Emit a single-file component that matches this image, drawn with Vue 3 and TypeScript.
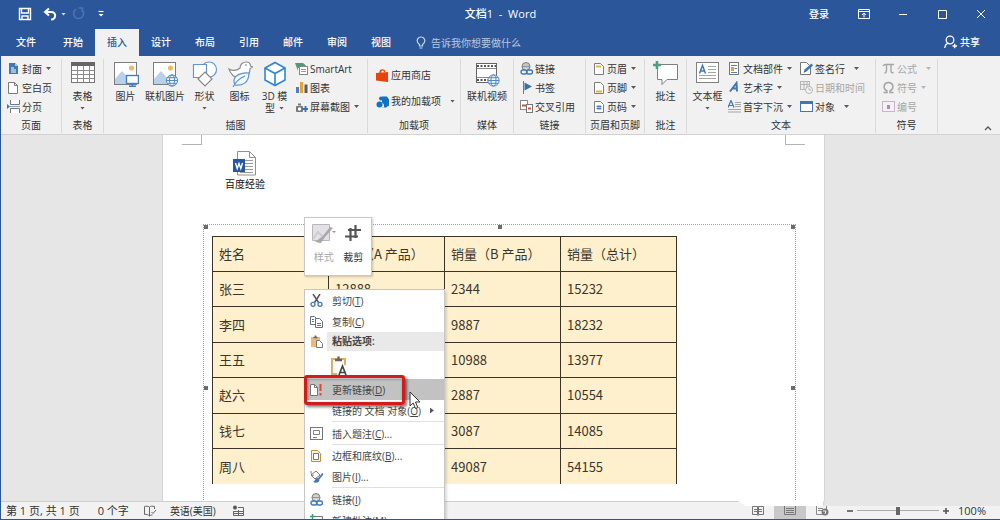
<script setup lang="ts">
import { ref } from 'vue'

interface Cmd {
  text: string
  icon: string
  caret?: 'near' | 'far'
  off?: boolean
  second?: string
}
interface Group {
  name: string
  label: string
  big?: Cmd[]
  cols?: Cmd[][]
}
interface MenuItem {
  text?: string
  key?: string
  tail?: string
  icon?: string
  kind?: 'item' | 'thin' | 'sep' | 'head' | 'paste'
  hot?: boolean
  sub?: boolean
}

const globe = (x: number, y: number, r: number, c: string) =>
  `<g fill="#f4f8fc" stroke="${c}" stroke-width="1"><circle cx="${x}" cy="${y}" r="${r}"/><ellipse cx="${x}" cy="${y}" rx="${r / 2.2}" ry="${r}" fill="none"/><path d="M${x - r} ${y}h${2 * r}M${x - r * 0.85} ${y - r / 2}h${r * 1.7}M${x - r * 0.85} ${y + r / 2}h${r * 1.7}" fill="none"/></g>`

const photo = '<rect x="1.5" y="1.5" width="22" height="22" fill="#fff" stroke="#7c7c7c"/><circle cx="18.5" cy="7" r="2.6" fill="#eebc63"/><path d="M2 23v-5l7-8 8 9 2-2 4 4v2z" fill="#b9d0ea"/>'

const bigIcons: Record<string, string> = {
  table: '<rect x="1.5" y="1.5" width="23" height="20" fill="#fff" stroke="#777"/><path d="M1 1h24v4H1z" fill="#666"/><path d="M7.5 5v16M13.5 5v16M19.5 5v16M2 9.500h22M2 13.500h22M2 17.500h22" stroke="#8a8a8a" fill="none"/>',
  picture: photo + '<rect x="13.500" y="14.500" width="12" height="8" fill="#fff" stroke="#3f7fc4" stroke-width="1.400"/><path d="M19.500 22.500v2.500M16 25.300h7" stroke="#3f7fc4" stroke-width="1.400"/>',
  online: photo + globe(20, 19.500, 5.600, '#4d87c4'),
  shapes: '<g fill="#fff" stroke="#6296d0" stroke-width="1.200"><circle cx="17" cy="8.500" r="7.500"/><path d="M1.500 3.500h13v13h-13z"/><path d="M13 11l7 7-7 7-7-7z" stroke="#888"/></g>',
  icons: '<path d="M2 8c3 2 8 2 11-1 0-4 3-6 6-6 3 0 4.500 2 4.500 4l2 1-2.500 1.500c0 4-2 7-5 8-4 2-9 2-12-1-2-2-3.500-4-4-6.500z" fill="#fff" stroke="#8b8b8b" stroke-width="1.200"/><circle cx="19" cy="4" r=".8" fill="#666"/><path d="M22 12c-7-1-15 2-15 8 0 1 .5 3 1 4 7 1 14-2 14-12zM6 26c3-6 7-9 12-11" fill="#f3f8fd" stroke="#5b92cf" stroke-width="1.200"/>',
  cube: '<path d="M13 1.500l10 5.500v12L13 24.500 3 19V7z" fill="#fff" stroke="#2e86d6" stroke-width="1.600"/><path d="M3 7l10 5.500L23 7M13 12.500v12" fill="none" stroke="#2e86d6" stroke-width="1.600"/>',
  video: '<rect x="2.500" y="2.500" width="20" height="19" fill="#fff" stroke="#666"/><path d="M3 5h19M3 19h19" stroke="#555" stroke-width="2" stroke-dasharray="2 1.500"/><path d="M3 7.500h19M3 16.500h19" stroke="#888"/>' + globe(19.500, 19.500, 5.600, '#4d87c4'),
  comment: '<path d="M4.500 3.500h20v15H14l-5 5v-5H4.500z" fill="#fff" stroke="#7f7f7f"/><path d="M4 0v8M0 4h8" stroke="#4d9f7d" stroke-width="2.600"/>',
  textbox: '<rect x="1.500" y="1.500" width="22" height="20" fill="#fff" stroke="#808080"/><path d="M4.500 12.500l3-8 3 8M5.500 10h4" stroke="#3e78ba" stroke-width="1.500" fill="none"/><path d="M13 5.500h8M13 8.500h8M13 11.500h8M4 14.500h17M4 17.500h17" stroke="#a5a5a5"/>'
}

const link = '<g fill="none"><circle cx="6" cy="4.500" r="4" stroke="#777"/><path d="M2 4.500h8M6 .5v6M4 1v6M8 1v6" stroke="#888" stroke-width=".8"/><rect x="1" y="8" width="6" height="4" rx="2" fill="#f1f1f1" stroke="#3c78b8" stroke-width="1.400"/><rect x="6.500" y="8" width="6" height="4" rx="2" stroke="#3c78b8" stroke-width="1.400"/></g>'
const sheet = '<path d="M2.500 1.500h6l3 3v8h-9z" fill="#fff" stroke="#7d7d7d"/>'

const smallIcons: Record<string, string> = {
  cover: '<path d="M2 1h6l3 3v8H2z" fill="#3f78b5"/><path d="M8 1v3h3" fill="#a9c6e4"/><path d="M4 6h3M4 8h5M4 10h5" stroke="#fff"/>',
  blank: '<path d="M1.500 1.500h6l3 3v8h-9z" fill="#fff" stroke="#7a7a7a"/><path d="M7.500 1.500v3h3" fill="none" stroke="#7a7a7a"/>',
  pagebreak: '<path d="M3.500 0v4.500h9V0M3.500 13V8.500h9V13" fill="#fff" stroke="#777"/><path d="M3 6.500h10" stroke="#8aa9c9"/><path d="M0 4l3 2.500L0 9z" fill="#3a78b8"/>',
  smartart: '<path d="M0 1h8l3 2.500-3 2.500H3v3z" fill="#4f9a79"/><rect x="4.500" y="4.500" width="8" height="8" fill="#fff" stroke="#888"/><path d="M6 7.500h5M6 9.500h5" stroke="#999"/>',
  chart: '<path d="M1 6h3v6H1z" fill="#4a80bd"/><path d="M5 1h3v11H5z" fill="#e3a13e"/><path d="M9.500 3.500h3V12h-3z" fill="#5d5d5d"/>',
  shot: '<rect x="1" y="6" width="7" height="6" rx="1" fill="#777"/><path d="M3 4.500h3" stroke="#777" stroke-width="2"/><circle cx="4.500" cy="9" r="1.700" fill="#fff"/><path d="M10.500 6v6M7.500 9h6" stroke="#2f73b8" stroke-width="1.800"/>',
  store: '<path d="M0 4l12-1v10L0 11.500z" fill="#e8430d"/><path d="M4 4c0-4 4.500-4 5-1" fill="none" stroke="#e8430d" stroke-width="1.400"/>',
  addin: '<path d="M6 1.500h5l2 3v6l-3 2H6z" fill="#1272c4"/><circle cx="5" cy="3.500" r="2" fill="#1272c4"/><path d="M0 6.500h5l3 3v3H0z" fill="#f1f1f1"/><circle cx="3.500" cy="9.500" r="3" fill="#1272c4"/>',
  link,
  bookmark: '<path d="M3.500 0v13" stroke="#777"/><path d="M4.500 1.500l7.500 4-7.500 4z" fill="#3b70aa"/>',
  cross: '<rect x=".5" y=".5" width="7" height="9" fill="#fff" stroke="#888"/><rect x="6.500" y="4.500" width="6" height="8" fill="#fff" stroke="#777"/><path d="M2 5.500h4M8 8.500h3" stroke="#cf553b" stroke-width="1.800"/>',
  header: sheet + '<path d="M4 4.500h5" stroke="#e3b04f" stroke-width="2"/>',
  footer: sheet + '<path d="M4 10.500h6" stroke="#e3b04f" stroke-width="2"/>',
  number: sheet + '<path d="M6 5v5M8 5v5M4.500 6.500h5M4.500 8.500h5" stroke="#3e78ba" stroke-width=".9"/>',
  parts: '<rect x="1.500" y=".5" width="9" height="12" fill="#fff" stroke="#777"/><path d="M3 3.500h6M6.500 6.500H9M3 10.500h6" stroke="#5583ba"/><path d="M3 5h3v4H3z" fill="#e2a33f"/>',
  wordart: '<path d="M2 10.500l6.500-8.500.5 8.500M4.500 7.500H9" stroke="#3e78ba" stroke-width="2" fill="none"/>',
  dropcap: '<path d="M0 7.500L3 .5l3 7M1 5.500h4" stroke="#3e78ba" stroke-width="1.200" fill="none"/><path d="M7 2.500h6M7 4.500h6M7 6.500h6M0 9.500h13M0 12h13" stroke="#a5a5a5"/>',
  sign: '<path d="M.5.500h6l4 4v8H.5z" fill="#fff" stroke="#777"/><path d="M3.500 11l1-3.500 7-6 1.500 2-6.500 6z" fill="#3e78ba"/>',
  date: '<rect x=".5" y=".5" width="9" height="8" fill="#eee" stroke="#b5b5b5"/><path d="M1 3.500h9M4 1v7M7 1v7" stroke="#b5b5b5"/><circle cx="9" cy="9" r="3.500" fill="#f4f4f4" stroke="#b5b5b5"/><path d="M9 7v2h2" fill="none" stroke="#b5b5b5"/>',
  object: '<rect x=".5" y="1.500" width="12" height="10" fill="#fff" stroke="#3e78ba"/><path d="M0 1h13v3H0z" fill="#3e78ba"/>',
  pi: '<path d="M1 4c1-2 2-1.500 4-1.500h7M4.500 3v5c0 2-1 3-2 3M9 3v6c0 2 1.500 2 2.500 1.500" fill="none" stroke="#a5a5a5" stroke-width="1.400"/>',
  omega: '<path d="M1.500 11.500H5V10C0 7 2 1.500 6.500 1.500S13 7 8 10v1.500h3.500" fill="none" stroke="#a5a5a5" stroke-width="1.500"/>',
  num: '<rect x=".5" y="1.500" width="12" height="10" fill="#f6eff6" stroke="#c9b4cb"/><path d="M5 5h3v4H5z" fill="#a890ab"/>',
  cut: '<path d="M3 0l5.500 8.500M10 0L4.500 8.500" stroke="#555" stroke-width="1.500"/><circle cx="3" cy="10.300" r="2" fill="none" stroke="#3e78ba" stroke-width="1.300"/><circle cx="10" cy="10.300" r="2" fill="none" stroke="#3e78ba" stroke-width="1.300"/>',
  copy: '<g fill="#fff" stroke="#5f6f80"><path d="M.5 1.500h4l2 2v6h-6z"/><path d="M5.500 3.500h4l3 3v6h-7z"/></g><path d="M2 4.500h2M2 6.500h2M7 8.500h4M7 10.500h4" stroke="#3e78ba"/>',
  paste: '<path d="M1 2h9v10H1z" fill="#ecba78"/><path d="M3.500 2.500h4M5.500.500v2" stroke="#666" stroke-width="1.600"/><path d="M6.500 5.500h3l3 3v4h-6z" fill="#fff" stroke="#777"/>',
  update: '<path d="M.5 1.500h4l3 3v8h-7z" fill="#fff" stroke="#777"/><path d="M4.500 1.500v3h3" fill="none" stroke="#777"/><path d="M10.500 1v7M10.500 10v2.500" stroke="#dd4b39" stroke-width="2"/>',
  caption: '<rect x=".5" y=".5" width="12" height="12" fill="#fff" stroke="#777"/><path d="M3.500 3.500h6v4h-6zM3 10.500h4" fill="none" stroke="#8a7f90"/>',
  border: '<path d="M1.500 1.500h6l3 3v8h-9z" fill="#fdf1dc" stroke="#c58c3a"/><path d="M3.500 4.500h5v6h-5z" fill="#fff" stroke="#777"/>',
  format: '<path d="M1 5l5-4 4 4-5 4z" fill="#fff" stroke="#777"/><path d="M1 1c0 4 1 5 3 4" fill="none" stroke="#777"/><path d="M13 3.500L8.500 9" stroke="#3e78ba" stroke-width="1.800"/><path d="M7.500 8c-3 0-1.500 3-4.500 3.800 2 1.500 6.500 1.200 6.500-2z" fill="#3e78ba"/>',
  note: '<path d="M5 2.500h7.500v8H8l-3 2.500v-2.500H2.500V6" fill="#fff" stroke="#777"/><path d="M2.500 0v5M0 2.500h5" stroke="#3f9a73" stroke-width="1.400"/>'
}

const tabs = ['文件', '开始', '插入', '设计', '布局', '引用', '邮件', '审阅', '视图']
const activeTab = ref('插入')
const zoom = ref(50)

const groups: Group[] = [
  { name: 'pages', label: '页面', cols: [[
    { text: '封面', icon: 'cover', caret: 'near' },
    { text: '空白页', icon: 'blank' },
    { text: '分页', icon: 'pagebreak' }]] },
  { name: 'tables', label: '表格', big: [{ text: '表格', icon: 'table', caret: 'near' }] },
  { name: 'art', label: '插图', big: [
    { text: '图片', icon: 'picture' },
    { text: '联机图片', icon: 'online' },
    { text: '形状', icon: 'shapes', caret: 'near' },
    { text: '图标', icon: 'icons' },
    { text: '3D 模', icon: 'cube', second: '型', caret: 'near' }],
    cols: [[
      { text: 'SmartArt', icon: 'smartart' },
      { text: '图表', icon: 'chart' },
      { text: '屏幕截图', icon: 'shot', caret: 'near' }]] },
  { name: 'addins', label: '加载项', cols: [[
    { text: '应用商店', icon: 'store' },
    { text: '我的加载项', icon: 'addin', caret: 'far' }]] },
  { name: 'media', label: '媒体', big: [{ text: '联机视频', icon: 'video' }] },
  { name: 'links', label: '链接', cols: [[
    { text: '链接', icon: 'link' },
    { text: '书签', icon: 'bookmark' },
    { text: '交叉引用', icon: 'cross' }]] },
  { name: 'headers', label: '页眉和页脚', cols: [[
    { text: '页眉', icon: 'header', caret: 'near' },
    { text: '页脚', icon: 'footer', caret: 'near' },
    { text: '页码', icon: 'number', caret: 'near' }]] },
  { name: 'notes', label: '批注', big: [{ text: '批注', icon: 'comment' }] },
  { name: 'text', label: '文本', big: [{ text: '文本框', icon: 'textbox', caret: 'near' }],
    cols: [[
      { text: '文档部件', icon: 'parts', caret: 'near' },
      { text: '艺术字', icon: 'wordart', caret: 'near' },
      { text: '首字下沉', icon: 'dropcap', caret: 'near' }], [
      { text: '签名行', icon: 'sign', caret: 'far' },
      { text: '日期和时间', icon: 'date', off: true },
      { text: '对象', icon: 'object', caret: 'far' }]] },
  { name: 'symbols', label: '符号', cols: [[
    { text: '公式', icon: 'pi', caret: 'far', off: true },
    { text: '符号', icon: 'omega', caret: 'near', off: true },
    { text: '编号', icon: 'num', off: true }]] }
]

const head = ['姓名', '销量（A 产品）', '销量（B 产品）', '销量（总计）']
const rows = [
  ['张三', '12888', '2344', '15232'],
  ['李四', '8345', '9887', '18232'],
  ['王五', '2989', '10988', '13977'],
  ['赵六', '7667', '2887', '10554'],
  ['钱七', '10998', '3087', '14085'],
  ['周八', '5068', '49087', '54155']
]

const menu: MenuItem[] = [
  { text: '剪切(', key: 'T', tail: ')', icon: 'cut' },
  { text: '复制(', key: 'C', tail: ')', icon: 'copy' },
  { kind: 'head', text: '粘贴选项:', icon: 'paste' },
  { kind: 'paste' },
  { text: '更新链接(', key: 'D', tail: ')', icon: 'update', hot: true },
  { text: '链接的 文档 对象(', key: 'O', tail: ')', sub: true },
  { kind: 'sep' },
  { text: '插入题注(', key: 'C', tail: ')...', icon: 'caption' },
  { kind: 'thin' },
  { text: '边框和底纹(', key: 'B', tail: ')...', icon: 'border' },
  { text: '图片(', key: 'I', tail: ')...', icon: 'format' },
  { kind: 'sep' },
  { text: '链接(', key: 'I', tail: ')', icon: 'link' },
  { text: '新建批注(', key: 'M', tail: ')', icon: 'note' }
]
</script>

<template>
  <div class="window">
    <header class="titlebar">
      <div class="quick">
        <button aria-label="保存"><svg width="14" height="14" viewBox="0 0 14 14"><path d="M1.500 1.500h11v11h-11z" fill="none" stroke="#fff" stroke-width="1.400"/><path d="M3.500 1.500v4.500h7V1.500M4 12.500V9h6v3.500" fill="none" stroke="#fff" stroke-width="1.400"/></svg></button>
        <button aria-label="撤消" class="undo"><svg width="14" height="14" viewBox="0 0 14 14"><path d="M6 1.500L2 5l4 3.500M2.500 5H8c6 0 5 7.500 0 7.500" fill="none" stroke="#fff" stroke-width="2"/></svg><i class="caret"></i></button>
        <button aria-label="重复" class="redo"><svg width="14" height="14" viewBox="0 0 14 14"><path d="M10.500 2.500A5 5 0 1 1 5 2.300M7.500 1h4v4" fill="none" stroke="#4e74b0" stroke-width="1.600"/></svg></button>
        <button aria-label="自定义快速访问工具栏" class="custom"><svg width="8" height="8" viewBox="0 0 8 8"><path d="M1.500 1.500h5" stroke="#fff" stroke-width="1.200"/><path d="M1.500 4h5L4 6.500z" fill="#fff"/></svg></button>
      </div>
      <h1>文档1&nbsp; -&nbsp; Word</h1>
      <div class="wincontrols">
        <button class="login">登录</button>
        <button aria-label="功能区显示选项"><svg width="12" height="12" viewBox="0 0 12 12"><path d="M.5 1.500h11v9H.5zM.5 3.500h11M6 9.500V5M4 7l2-2 2 2" fill="none" stroke="#fff"/></svg></button>
        <button aria-label="最小化"><svg width="10" height="12" viewBox="0 0 10 12"><path d="M1 6.500h8" stroke="#fff"/></svg></button>
        <button aria-label="最大化"><svg width="10" height="12" viewBox="0 0 10 12"><path d="M1.500 2.500h8v8h-8z" fill="none" stroke="#fff"/></svg></button>
        <button aria-label="关闭"><svg width="10" height="12" viewBox="0 0 10 12"><path d="M1 2l8 8M9 2l-8 8" stroke="#fff"/></svg></button>
      </div>
    </header>

    <nav class="tabs">
      <button v-for="t in tabs" :key="t" :class="{ active: t === activeTab }" @click="activeTab = t">{{ t }}</button>
      <label class="tell">
        <svg width="10" height="14" viewBox="0 0 10 14"><path d="M3.500 10V8.500C-1 5 2 1 5 1s6 4 1.500 7.500V10zM3.500 12h3" fill="none" stroke="#c6d3e8" stroke-width="1.200"/></svg>
        <input type="text" aria-label="告诉我" placeholder="告诉我你想要做什么">
      </label>
      <button class="share"><svg width="13" height="14" viewBox="0 0 13 14"><circle cx="6" cy="5" r="3.800" fill="none" stroke="#fff" stroke-width="1.300"/><path d="M.7 13c.5-3 2-4.500 4-4.800M8.500 11h4.500M10.700 8.800v4.500" fill="none" stroke="#fff" stroke-width="1.300"/></svg>共享</button>
    </nav>

    <section class="ribbon">
      <div v-for="g in groups" :key="g.name" class="group" :class="g.name">
        <div class="body">
          <button v-for="b in g.big" :key="b.text" class="big">
            <svg width="26" height="26" viewBox="0 0 26 26" v-html="bigIcons[b.icon]"></svg>
            <span>{{ b.text }}</span>
            <span v-if="b.caret" class="second">{{ b.second }}<i class="caret"></i></span>
          </button>
          <div v-for="(c, i) in g.cols" :key="i" class="col">
            <button v-for="b in c" :key="b.text" class="small" :class="{ off: b.off }">
              <svg width="13" height="13" viewBox="0 0 13 13" v-html="smallIcons[b.icon]"></svg>
              <span>{{ b.text }}</span>
              <i v-if="b.caret" class="caret" :class="b.caret"></i>
            </button>
          </div>
        </div>
        <div class="label">{{ g.label }}</div>
      </div>
      <button class="collapse" aria-label="折叠功能区"><svg width="8" height="8" viewBox="0 0 8 8"><path d="M1 6l3-3 3 3" fill="none" stroke="#555" stroke-width="1.300"/></svg></button>
    </section>

    <main class="workspace">
      <article class="page">
        <div class="crops"><i></i><i></i></div>
        <figure class="file">
          <svg width="24" height="25" viewBox="0 0 24 25"><path d="M4.500.500h12l6 6v17.500h-18z" fill="#fff" stroke="#909090"/><path d="M16.500.500v6h6" fill="none" stroke="#909090"/><path d="M12 9.500h8M12 12.500h8M12 15.500h8M12 18.500h8M7 21.500h13" stroke="#9a9a9a"/><path d="M0 8h12v13H0z" fill="#2458a4"/><path d="M2.500 12l1.700 5.500L6 12.500l1.800 5L9.500 12" fill="none" stroke="#fff" stroke-width="1.400"/></svg>
          <figcaption>百度经验</figcaption>
        </figure>
        <div class="frame">
          <table>
            <thead><tr><th v-for="h in head" :key="h">{{ h }}</th></tr></thead>
            <tbody><tr v-for="r in rows" :key="r[0]"><td v-for="(c, i) in r" :key="i">{{ c }}</td></tr></tbody>
          </table>
          <b class="h nw"></b><b class="h n"></b><b class="h ne"></b><b class="h w"></b><b class="h e"></b>
        </div>
      </article>
    </main>

    <footer class="status">
      <span class="pagecount">第 1 页, 共 1 页</span>
      <span class="words">0 个字</span>
      <svg class="book" width="14" height="12" viewBox="0 0 14 12"><path d="M6.500 2v9M6.500 2C5 1 3 1 1.500 1.500v8c2-.5 3.500 0 5 1.500 1-1 2-1 3-1M6.500 2c1-1 3-1 5-.5V4M8.500 7l1.500 1.500L13 5" fill="none" stroke="#666"/></svg>
      <span class="lang">英语(美国)</span>
      <svg width="12" height="12" viewBox="0 0 12 12"><circle cx="3" cy="2.500" r="2" fill="#555"/><path d="M6 2.500h5.500v8H1.500V6M2 6.500h9M2 8.500h9M6.500 5v5" fill="none" stroke="#666"/></svg>
      <div class="views">
        <button aria-label="阅读视图"><svg width="12" height="11" viewBox="0 0 12 11"><path d="M.5 1.500h5v8h-5zM6.500 1.500h5v8h-5zM2 4.500h8M2 6.500h8M6 0v11" fill="none" stroke="#777"/></svg></button>
        <button aria-label="页面视图" class="on"><svg width="12" height="11" viewBox="0 0 12 11"><path d="M.5.500h11v9H.5zM2 3.500h8M2 5.500h8M2 7.500h8" fill="none" stroke="#777"/></svg></button>
        <button aria-label="Web 版式视图"><svg width="13" height="11" viewBox="0 0 13 11"><path d="M.5.500h10v9H.5zM2 3.500h5M2 5.500h4" fill="none" stroke="#888"/><circle cx="9" cy="7" r="3.500" fill="#777"/><path d="M7 6h3l-1 3" stroke="#eee" fill="none"/></svg></button>
      </div>
      <button class="step" aria-label="缩小"><svg width="8" height="8" viewBox="0 0 8 8"><path d="M1 4h6" stroke="#555" stroke-width="1.600"/></svg></button>
      <input v-model="zoom" type="range" min="0" max="100" aria-label="显示比例">
      <button class="step" aria-label="放大"><svg width="8" height="8" viewBox="0 0 8 8"><path d="M1 4h6M4 1v6" stroke="#555" stroke-width="1.600"/></svg></button>
      <button class="percent">100%</button>
      <div class="veil"></div>
    </footer>

    <div class="mini">
      <button class="off"><svg width="26" height="22" viewBox="0 0 26 22"><path d="M1.500 2.500h17v16h-17z" fill="#e3e1e5" stroke="#b9b5bc"/><path d="M2 17l5-7 5 5 3-3" fill="none" stroke="#cfcbd2" stroke-width="2"/><path d="M22 6l-8 9-4 6c-3 0-5-1-6-2 3 0 4-3 7-4l8-10z" fill="#aaa6ad"/><path d="M21 9h4l-2 2z" fill="#999"/></svg>样式</button>
      <button><svg width="18" height="22" viewBox="0 0 18 22"><path d="M6.500 6v13M11.500 3v13M4 8h13M1 14.500h13" fill="none" stroke="#555" stroke-width="2.200"/></svg>裁剪</button>
    </div>

    <div class="menu" role="menu">
      <template v-for="(m, i) in menu" :key="i">
        <hr v-if="m.kind === 'sep' || m.kind === 'thin'" :class="m.kind">
        <div v-else-if="m.kind === 'paste'" class="pasteopts">
          <button aria-label="只保留文本"><svg width="18" height="22" viewBox="0 0 18 22"><path d="M2 4h13v15H2z" fill="#fff" stroke="#e4ab66" stroke-width="2"/><path d="M5 5h7M8.500 1.500V5" stroke="#666" stroke-width="2.400"/><path d="M7 10h11v12H7z" fill="#fff"/><path d="M9 20l3.500-9 3.500 9M10 17.500h5" fill="none" stroke="#444" stroke-width="1.700"/></svg></button>
        </div>
        <div v-else-if="m.kind === 'head'" class="row head">
          <svg width="13" height="13" viewBox="0 0 13 13" v-html="smallIcons[m.icon ?? '']"></svg><span>{{ m.text }}</span>
        </div>
        <button v-else class="row" role="menuitem" :class="{ hot: m.hot }">
          <svg width="13" height="13" viewBox="0 0 13 13" v-html="m.icon ? smallIcons[m.icon] : ''"></svg>
          <span>{{ m.text }}<u>{{ m.key }}</u>{{ m.tail }}</span>
          <i v-if="m.sub" class="arrow"></i>
        </button>
      </template>
    </div>
    <div class="callout"></div>
    <svg class="cursor" width="12" height="19" viewBox="0 0 12 19"><path d="M1 1v14l3.200-3 2.300 5.500 2.300-1L6.500 11H11z" fill="#fff" stroke="#333"/></svg>
  </div>
</template>

<style>
body { margin: 0; overflow: hidden; }
</style>

<style scoped>
* { box-sizing: border-box; }
.window {
  position: relative; height: 100vh; display: flex; flex-direction: column; overflow: hidden;
  border-left: 1px solid #2b579a; border-bottom: 1px solid #2b579a;
  font: 10px/12px "Open Sans", "Noto Sans CJK SC", sans-serif; color: #333; background: #e6e6e6;
}
button { border: 0; padding: 0; background: none; font: inherit; color: inherit; display: flex; align-items: center; white-space: nowrap; }
svg { display: block; flex: none; }
.caret { flex: none; width: 5px; height: 3px; background: currentColor; clip-path: polygon(0 0, 100% 0, 50% 100%); opacity: .8; }

.titlebar { flex: none; height: 28px; display: grid; grid-template-columns: 1fr auto 1fr; align-items: center; background: #2b579a; color: #fff; }
.titlebar h1 { margin: 0; font-size: 11px; font-weight: 500; line-height: 28px; }
.quick { display: flex; align-items: center; gap: 8px; padding-left: 17px; }
.undo { gap: 4px; padding-left: 3px; }
.redo { margin-left: -3px; }
.custom { padding-left: 4px; }
.wincontrols { display: flex; justify-content: flex-end; height: 26px; }
.wincontrols button { width: 39px; justify-content: center; }
.wincontrols .login { width: 54px; justify-content: flex-start; padding-left: 19px; font-weight: 500; }

.tabs { flex: none; display: flex; height: 28px; padding-top: 1px; background: #2b579a; color: #fff; }
.tabs > button { width: 44px; justify-content: center; padding-bottom: 1px; font-weight: 500; }
.tabs > button:first-child { width: 50px; }
.tabs > .active { background: #f1f1f1; color: #2b579a; }
.tell { display: flex; align-items: center; gap: 5px; margin-left: 13px; flex: 1; }
.tell input { width: 120px; border: 0; padding: 0; background: none; font: inherit; color: #fff; outline: 0; }
.tell input::placeholder { color: #b9c8e1; opacity: 1; }
.tabs > .share { width: auto; gap: 3px; margin-right: 20px; }

.ribbon { flex: none; display: flex; height: 79px; padding-top: 3px; background: #f1f1f1; border-bottom: 1px solid #d2d2d2; }
.group { flex: none; display: flex; flex-direction: column; border-right: 1px solid #dadada; margin-bottom: 1px; }
.body { flex: none; display: flex; height: 59px; padding-left: 6px; align-items: flex-start; }
.label { text-align: center; line-height: 15px; }
.pages { width: 61px; }
.tables { width: 42px; }
.art { width: 264px; }
.addins { width: 93px; }
.media { width: 53px; }
.links { width: 72px; }
.headers { width: 59px; }
.notes { width: 42px; }
.text { width: 189px; }
.symbols { width: 62px; }
.tables .body, .media .body, .notes .body { padding: 0; justify-content: center; }
.art .body { padding-left: 4px; }
.text .body { padding-left: 3px; }
.addins .body { padding-left: 8px; }
.big { flex-direction: column; min-width: 35px; padding: 2px 2px 0; }
.big svg { margin-bottom: 3px; }
.second { display: flex; align-items: center; gap: 4px; height: 12px; }
.col { display: flex; flex-direction: column; }
.big + .col { padding-left: 3px; }
.text .col + .col { padding-left: 8px; }
.small { height: 19px; gap: 2px; }
.addins .col { padding-top: 3px; }
.addins .small { height: 26px; }
.caret.near { margin-left: 2px; }
.caret.far { margin-left: 7px; }
.off { color: #a6a6a6; }
.collapse { margin-left: auto; padding-right: 8px; align-items: flex-end; margin-bottom: 2px; }

.workspace { flex: 1; min-height: 0; overflow: hidden; padding-right: 14px; }
.page { width: 661px; height: 600px; margin: 0 auto; background: #fff; box-shadow: 0 0 0 1px #d6d6d6; }
.crops { display: flex; justify-content: space-between; height: 10px; padding: 0 19px; }
.crops i { width: 20px; border: solid #b4b4b4; border-width: 0 1px 1px 0; }
.crops i:last-child { border-width: 0 0 1px 1px; }
.file { width: 60px; margin: 6px 0 0 52px; display: flex; flex-direction: column; align-items: center; color: #111; }
.file figcaption { margin-top: 2px; }
.frame { position: relative; margin: 34px 28px 0 40px; height: 328px; padding: 11px 8px; border: 1px dotted #a0a0a0; }
.h { position: absolute; width: 4px; height: 4px; background: #6b6b6b; }
.nw { left: 0; top: 0; }
.n { left: 50%; top: 0; margin-left: -2px; }
.ne { right: 0; top: 0; }
.w { left: 0; top: 50%; margin-top: -2px; }
.e { right: 0; top: 50%; margin-top: -2px; }
table { width: 465px; height: 248px; table-layout: fixed; border-collapse: collapse; background: #fff0cd; font: 13px/16px "Noto Sans CJK SC", sans-serif; color: #3b352b; }
th, td { height: 35px; padding: 0 6px; border: 1px solid #3a3428; font-weight: 400; text-align: left; white-space: nowrap; }
tbody tr:last-child td { border-bottom: 0; }

.mini { position: absolute; left: 303px; top: 217px; width: 68px; height: 59px; display: flex; gap: 2px; padding: 4px 4px 4px 5px; background: #fff; border: 1px solid #c8c8c8; box-shadow: 1px 1px 2px #0003; }
.mini button { flex: 1; flex-direction: column; gap: 7px; }
.menu { position: absolute; left: 303px; top: 289px; width: 141px; padding-left: 5px; background: #fff; border: 1px solid #c6c6c6; box-shadow: 2px 2px 2px #0002; color: #444; }
.row { width: 100%; height: 21px; gap: 9px; }
.row.head { display: flex; align-items: center; height: 19px; gap: 4px; }
.row.head span { flex: 1; padding-left: 5px; line-height: 19px; background: #e9e9e9; font-weight: 600; }
.row.hot { margin-left: -5px; padding-left: 5px; width: calc(100% + 5px); background: #c2c2c2; }
.arrow { width: 4px; height: 6px; background: #555; clip-path: polygon(0 0, 100% 50%, 0 100%); }
.pasteopts { height: 28px; padding: 4px 0 0 20px; }
hr { margin: 0 0 0 22px; border: 0; border-top: 1px solid #e0e0e0; height: 1px; }
hr.sep { height: 2px; }
.callout { position: absolute; left: 303px; top: 375px; width: 101px; height: 30px; border: 3px solid #d01c1c; border-radius: 3px; box-shadow: 2px 2px 3px #0008, inset 1px 1px 3px #0006; }
.cursor { position: absolute; left: 408px; top: 391px; }

.status { flex: none; position: relative; display: flex; align-items: center; height: 18px; padding: 0 14px 0 5px; background: #f2f2f2; border-top: 1px solid #cfcfcf; font-size: 11px; }
.words { margin-left: 18px; }
.book { margin: 0 13px 0 14px; }
.lang { margin-right: 16px; font-size: 10px; }
.views { display: flex; align-self: stretch; margin-left: auto; }
.views button { width: 32px; justify-content: center; }
.views .on { background: #c8c8c8; }
.step { padding: 0 3px; }
.views + .step { margin-left: 5px; }
input[type="range"] { appearance: none; width: 82px; height: 12px; margin: 0; background: linear-gradient(#aaa, #aaa) center / 100% 1px no-repeat; }
input[type="range"]::-webkit-slider-thumb { appearance: none; width: 4px; height: 8px; background: #666; }
.percent { margin-left: 5px; }
.veil { position: absolute; right: 0; top: -1px; width: 262px; height: 5px; background: linear-gradient(90deg, #fff 85px, #d6d6d6 85px, #e6e6e6 87px); clip-path: polygon(0 0, 100% 0, 100% 100%, 8px 100%); }
</style>
